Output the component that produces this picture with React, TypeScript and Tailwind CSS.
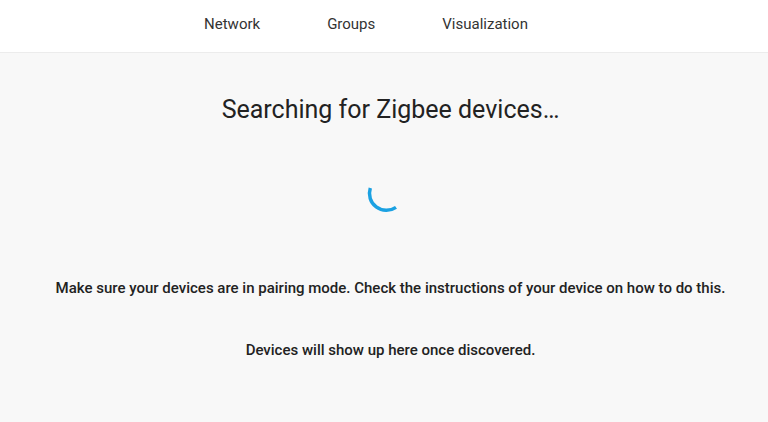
export default function App() {
  return (
    <div className="min-h-[422px] bg-[#f8f8f8] font-['Roboto',sans-serif] text-[#212121]">
      <header className="h-[53px] bg-white border-b border-[#ececec] flex items-center justify-center pr-[36px]">
        <nav className="flex gap-[67px] text-[15px] text-[#333] pb-[4px]">
          <span>Network</span>
          <span>Groups</span>
          <span>Visualization</span>
        </nav>
      </header>
      <main className="flex flex-col items-center pl-[13px]">
        <h1 className="mt-[42px] text-[25px] leading-[30px] text-[#222]">Searching for Zigbee devices…</h1>
        <svg className="mt-[46px] mr-[7px]" width="44" height="44" viewBox="0 0 44 44">
          <path
            d="M 5.3 17 A 17 17 0 0 0 31 36.4"
            fill="none"
            stroke="#1ba1e2"
            strokeWidth="3.5"
            strokeLinecap="butt"
          />
        </svg>
        <p className="mt-[63px] text-[15px] leading-[20px] font-medium text-[#222]">
          Make sure your devices are in pairing mode. Check the instructions of your device on how to do this.
        </p>
        <p className="mt-[42px] text-[15px] leading-[20px] font-medium text-[#222]">
          Devices will show up here once discovered.
        </p>
      </main>
    </div>
  );
}
